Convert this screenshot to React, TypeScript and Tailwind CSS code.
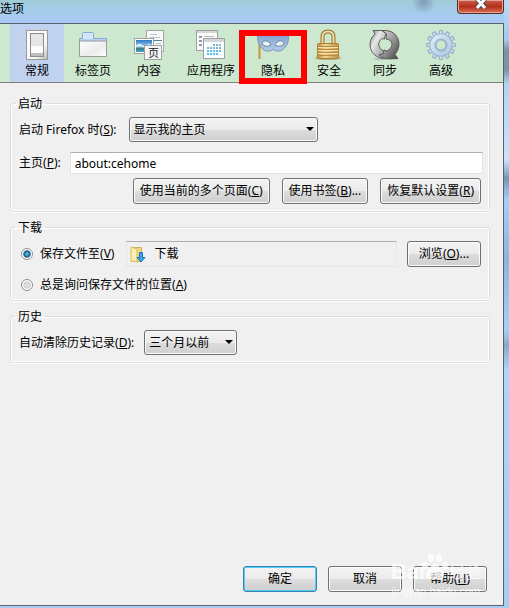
import React, { useState } from "react";

type ChildrenProps = { children: React.ReactNode };

const BUTTON_FACE =
  "border rounded-[3px] bg-[linear-gradient(#f3f3f3,#ebebeb_50%,#dddddd_50%,#cfcfcf)]";
const NORMAL_EDGE = "border-[#707070] shadow-[inset_0_0_0_1px_#fbfbfb]";
const DEFAULT_EDGE = "border-[#3c7fb1] shadow-[inset_0_0_0_1px_#48d0f5]";

function Icon({ children }: ChildrenProps) {
  return (
    <svg viewBox="0 0 32 32" className="block size-8" aria-hidden="true">
      {children}
    </svg>
  );
}

function SwitchIcon() {
  return (
    <Icon>
      <defs>
        <linearGradient id="sw" x1="0" y1="0" x2="1" y2="1">
          <stop offset="0" stopColor="#fff" />
          <stop offset=".7" stopColor="#f6f6f6" />
          <stop offset="1" stopColor="#b4b4b4" />
        </linearGradient>
      </defs>
      <rect x="5.5" y="1.5" width="21" height="29" fill="url(#sw)" stroke="#9a9a9a" />
      <rect x="9.5" y="4.5" width="13" height="23" fill="#e6e6e6" stroke="#8c8c8c" />
      <rect x="10" y="17" width="12" height="7" fill="#fdfdfd" />
      <rect x="10" y="24" width="12" height="3" fill="#bdbdbd" />
    </Icon>
  );
}

function TabIcon() {
  return (
    <Icon>
      <defs>
        <linearGradient id="tb" x1="0" y1="0" x2="1" y2="1">
          <stop offset="0" stopColor="#fff" />
          <stop offset=".6" stopColor="#ececec" />
          <stop offset="1" stopColor="#fff" />
        </linearGradient>
      </defs>
      <path d="M2.5 12V9.5h3v-5q0-1 1-1h9q1 0 1 1v5h13V12z" fill="#d3e5f9" stroke="#8aa9d0" />
      <path d="M3 11h26" stroke="#b5d0f0" strokeWidth="2" />
      <path d="M2.5 12v15.500h27V12z" fill="url(#tb)" stroke="#9a9a9a" />
    </Icon>
  );
}

function ContentIcon() {
  return (
    <Icon>
      <defs>
        <linearGradient id="sky" x1="0" y1="0" x2="0" y2="1">
          <stop offset="0" stopColor="#2a78c8" />
          <stop offset=".6" stopColor="#a5d9f2" />
          <stop offset=".65" stopColor="#3a7d72" />
          <stop offset="1" stopColor="#4a9bd0" />
        </linearGradient>
      </defs>
      <rect x="13.5" y="1.5" width="17" height="21" fill="#f7f8f9" stroke="#a5a5a5" />
      <path d="M17 5.5h7M17 8.5h10M23 14.5h5" stroke="#b8c2cc" />
      <path d="M17 11.5h12" stroke="#468b9e" />
      <rect x="1.5" y="9.5" width="19" height="15" fill="#fff" stroke="#a0a0a0" />
      <rect x="3" y="11" width="16" height="12" fill="url(#sky)" />
      <path d="M3 17q3-4 6-1t6-1l4 1v1q-6 3-9 1t-7 0z" fill="#e4f5f9" />
      <rect x="11.5" y="16.5" width="17" height="14" fill="#f6f6f6" stroke="#a0a0a0" />
      <text x="15" y="28" fontSize="11" fill="#222">页</text>
    </Icon>
  );
}

function AppsIcon() {
  const cells: [number, number][] = [];
  for (let y = 0; y < 4; y++) {
    for (let x = 0; x < 5; x++) {
      if (!(y === 0 && x < 2) && !(y === 3 && x > 3)) cells.push([x, y]);
    }
  }
  return (
    <Icon>
      <rect x="1.5" y="1.5" width="21" height="20" fill="#fbfbfb" stroke="#a0a0a0" />
      <path d="M2 3h20" stroke="#d5d5d5" strokeWidth="2" />
      <path d="M4 8h3M4 12h3M4 16h3" stroke="#8898a8" strokeWidth="2" />
      <path d="M9 7.5h10" stroke="#b4b8bc" />
      <rect x="8.5" y="9.5" width="21" height="20" fill="#fafdff" stroke="#a0a0a0" />
      <path d="M9 11.5h20" stroke="#d3d5d7" strokeWidth="3" />
      {cells.map(([x, y]) => (
        <rect key={`${x}-${y}`} x={12 + x * 3} y={15 + y * 3} width="2" height="2" fill={y > 1 ? "#5cc0e4" : "#86b4c8"} />
      ))}
    </Icon>
  );
}

function MaskIcon() {
  return (
    <Icon>
      <defs>
        <linearGradient id="mk" x1="0" y1="0" x2="0" y2="1">
          <stop offset="0" stopColor="#7d9fcb" />
          <stop offset="1" stopColor="#b4cdee" />
        </linearGradient>
      </defs>
      <path d="M2.5 8v22" stroke="#c4963a" strokeWidth="2" />
      <path d="M.5 5q8-2 15.500 2 8-4 15.500-2 1 9-4 14-3 4-8 3-3-3-7 0-5 1-8-3Q0 14 .5 5z" fill="url(#mk)" stroke="#7f95b5" />
      <path d="M5 15q1-4 5-3 3 1 4 4-5 3-9-1zM27 15q-1-4-5-3-3 1-4 4 5 3 9-1z" fill="#e9f3ea" stroke="#6d85a8" />
    </Icon>
  );
}

function LockIcon() {
  return (
    <Icon>
      <defs>
        <linearGradient id="lk" x1="0" y1="0" x2="1" y2="0">
          <stop offset="0" stopColor="#b88a38" />
          <stop offset=".35" stopColor="#f0d69a" />
          <stop offset="1" stopColor="#c4923b" />
        </linearGradient>
      </defs>
      <ellipse cx="15" cy="29" rx="13" ry="2" fill="#a3b08e" />
      <path d="M9.5 17V8q0-5.500 5.500-5.500T20.500 8v9" fill="none" stroke="#9a7430" strokeWidth="4" />
      <path d="M9.5 17V8q0-5.500 5.500-5.500T20.500 8v9" fill="none" stroke="#ecd6a4" strokeWidth="2" />
      <rect x="4.5" y="14.5" width="21" height="15" rx="1" fill="url(#lk)" stroke="#b08235" />
      <path d="M5 17.5h20M5 20.5h20M5 23.5h20M5 26.5h20" stroke="#b98b3c" />
      <path d="M5 18.5h20M5 21.5h20M5 24.5h20" stroke="#f5e1ad" />
    </Icon>
  );
}

function SyncIcon() {
  return (
    <Icon>
      <defs>
        <linearGradient id="sy1" x1="0" y1="0" x2="1" y2="1">
          <stop offset="0" stopColor="#777" />
          <stop offset=".35" stopColor="#e8e8e8" />
          <stop offset="1" stopColor="#888" />
        </linearGradient>
        <linearGradient id="sy2" x1="0" y1="0" x2="1" y2="1">
          <stop offset="0" stopColor="#e2e2e2" />
          <stop offset=".6" stopColor="#8a8a8a" />
          <stop offset="1" stopColor="#3c3c3c" />
        </linearGradient>
      </defs>
      <ellipse cx="17" cy="30" rx="12" ry="1" fill="#a8b9a8" />
      <path d="M14 29.500Q4 28 1.500 19.500-.5 10.500 6 5L4 1.500H13l4 3-2 6-1.500-1.500q-4 3-4 7 .5 4 6.500 7z" fill="url(#sy1)" stroke="#606060" />
      <path d="M13 1.500q11-1 15.500 7 4 9-2.500 17l3 4H18q-6 0-8-4l4-.5 1-4 2.500 1q5-2 5.500-6.500-.5-5-6-5.500l.5-5z" fill="url(#sy2)" stroke="#5c5c5c" />
    </Icon>
  );
}

function GearIcon() {
  return (
    <Icon>
      <defs>
        <linearGradient id="gr" x1="0" y1="0" x2="1" y2="1">
          <stop offset="0" stopColor="#dbe9f6" />
          <stop offset="1" stopColor="#b2cbe2" />
        </linearGradient>
      </defs>
      {Array.from({ length: 12 }, (_, i) => (
        <path key={i} d="M14 6l.5-4.500h3L18 6z" fill="#c9dcee" stroke="#93adc8" transform={`rotate(${i * 30} 16 16)`} />
      ))}
      <circle cx="16" cy="16" r="8" fill="none" stroke="#93adc8" strokeWidth="7" />
      <circle cx="16" cy="16" r="8" fill="none" stroke="url(#gr)" strokeWidth="5.5" />
      <circle cx="16" cy="16" r="6" fill="none" stroke="#8ba8c6" />
    </Icon>
  );
}

function FolderIcon() {
  return (
    <svg viewBox="0 0 16 17" className="h-[17px] w-4 shrink-0" aria-hidden="true">
      <path d="M1.5 1.5h10v14h-10z" fill="#f1d77b" stroke="#d4b254" />
      <path d="M1 1l6 2v13l-6-1z" fill="#fbeeb0" stroke="#d9bd66" />
      <path d="M9.5 6.5h3v5h2.5l-4 4.500-4-4.500h2.500z" fill="#38a5ec" stroke="#1671bd" />
    </svg>
  );
}

const TABS = [
  { label: "常规", icon: <SwitchIcon /> },
  { label: "标签页", icon: <TabIcon /> },
  { label: "内容", icon: <ContentIcon /> },
  { label: "应用程序", icon: <AppsIcon /> },
  { label: "隐私", icon: <MaskIcon />, marked: true },
  { label: "安全", icon: <LockIcon /> },
  { label: "同步", icon: <SyncIcon /> },
  { label: "高级", icon: <GearIcon /> },
];

function Key({ children }: ChildrenProps) {
  return <span>(<u className="underline-offset-1">{children}</u>)</span>;
}

function Button({ children, wide, primary }: ChildrenProps & { wide?: boolean; primary?: boolean }) {
  return (
    <button
      type="button"
      className={`h-[26px] whitespace-nowrap ${wide ? "w-[74px]" : "px-[6px]"} ${BUTTON_FACE} ${
        primary ? DEFAULT_EDGE : NORMAL_EDGE
      }`}
    >
      {children}
    </button>
  );
}

function Select({ id, options, className }: { id: string; options: string[]; className: string }) {
  return (
    <div className={`relative ${className}`}>
      <select id={id} className={`block h-[25px] w-full appearance-none pr-5 pl-1 ${BUTTON_FACE} ${NORMAL_EDGE}`}>
        {options.map((o) => (
          <option key={o}>{o}</option>
        ))}
      </select>
      <svg viewBox="0 0 8 4" className="pointer-events-none absolute top-[10px] right-1 h-1 w-2" aria-hidden="true">
        <path d="M0 0h8L4 4z" fill="#000" />
      </svg>
    </div>
  );
}

function Group({ title, children }: ChildrenProps & { title: string }) {
  return (
    <fieldset className="min-w-0 rounded-[3px] border border-[#d5dfe5] pt-[6px] pr-[6px] pb-[7px] pl-2 shadow-[inset_0_0_0_1px_#fff,0_1px_0_#fff]">
      <legend className="-ml-1 h-4 px-[3px] pt-px leading-4">{title}</legend>
      {children}
    </fieldset>
  );
}

function Radio({ id, defaultChecked, children }: ChildrenProps & { id: string; defaultChecked?: boolean }) {
  return (
    <div className="flex items-center gap-[7px] px-[2px] whitespace-nowrap">
      <input
        id={id}
        type="radio"
        name="download"
        defaultChecked={defaultChecked}
        className="size-3 appearance-none rounded-full border border-[#8e8f8f] bg-[radial-gradient(#e4e4e4,#d0d0d0_45%,#fff_60%)] checked:bg-[radial-gradient(circle,#62cdf4,#145581_45%,#fff_60%)]"
      />
      <label htmlFor={id}>{children}</label>
    </div>
  );
}

function Watermark() {
  return (
    <div className="pointer-events-none absolute right-[22px] bottom-[7px] flex flex-col items-center text-white/75" aria-hidden="true">
      <div className="flex items-end text-[22px] leading-6 font-bold">
        <span className="font-['Liberation_Sans']">Bai</span>
        <svg viewBox="0 0 28 32" className="-ml-1 h-8 w-7" fill="currentColor">
          <ellipse cx="4" cy="14" rx="3" ry="4" />
          <ellipse cx="10" cy="6" rx="3" ry="4" />
          <ellipse cx="18" cy="6" rx="3" ry="4" />
          <ellipse cx="24" cy="14" rx="3" ry="4" />
          <path d="M14 12q3 0 5 4 5 4 4 8-1 5-9 3-8 2-9-3-1-4 4-8 2-4 5-4z" />
        </svg>
        <span className="text-base leading-6 font-normal">经验</span>
      </div>
      <span className="font-['Liberation_Sans'] text-[11px] leading-[14px]">jingyan.baidu.com</span>
    </div>
  );
}

export default function App() {
  const [tab, setTab] = useState("常规");
  return (
    <div className="flex min-h-screen flex-col bg-[linear-gradient(#b9dcf0,#a5c9ef_40px,#7e93a8_50px,#7e93a8_70px,#b4d3f2_84px,#cbe2fb_160px,#7895b5_178px,#a6cffa_200px,#8db4dc_260px,#a8cff8_330px,#8aa8ca_345px,#b0d4fa_370px,#a8cdf0)] pr-[5px] pb-[2px] font-['Noto_Sans','Noto_Sans_CJK_SC',sans-serif] text-xs text-black">
      <header className="flex h-[23px] items-start justify-between bg-[radial-gradient(circle_at_84%_2px,#7f9bb8,transparent_12px),linear-gradient(#a0cbd8,#a5ccec_50%,#a9c9f3)]">
        <h1 className="pt-px leading-4">选项</h1>
        <button
          type="button"
          aria-label="关闭"
          className="flex h-[14px] w-[47px] items-start justify-center rounded-b-[4px] border border-t-0 border-[#5d2a2c] bg-[linear-gradient(#c8604a,#b5301a_50%,#d87254)] shadow-[inset_0_0_0_1px_#e5a398]"
        >
          <svg viewBox="0 0 12 9" className="h-[9px] w-3" aria-hidden="true">
            <path d="M2 -1l8 9M10 -1L2 8" stroke="#514a55" strokeWidth="5" />
            <path d="M2 -1l8 9M10 -1L2 8" stroke="#fff" strokeWidth="3" />
          </svg>
        </button>
      </header>

      <div className="relative flex flex-1 flex-col border-t border-r border-b border-[#56626e] bg-[#f0f0f0]">
        <nav className="flex h-[59px] gap-[2px] border-b border-[#808080] bg-[#cde8cf] pl-[10px]">
          {TABS.map((t) => (
            <button
              key={t.label}
              type="button"
              onClick={() => setTab(t.label)}
              className={`relative flex min-w-[54px] flex-col items-center px-[9px] pt-[5px] whitespace-nowrap ${
                tab === t.label ? "bg-[#c1d2ee]" : ""
              }`}
            >
              {t.icon}
              <span className="leading-5">{t.label}</span>
              {t.marked && <span className="absolute -inset-x-[7px] top-[6px] -bottom-[2px] border-6 border-[#fe0000]" />}
            </button>
          ))}
        </nav>

        <main className="flex flex-1 flex-col gap-[7px] pt-3 pr-[13px] pl-[10px]">
          <Group title="启动">
            <div className="flex items-center gap-3">
              <label htmlFor="startup" className="whitespace-nowrap">启动 Firefox 时<Key>S</Key>:</label>
              <Select id="startup" className="w-[189px]" options={["显示我的主页", "显示空白页", "显示上次打开的窗口和标签页"]} />
            </div>
            <div className="flex items-center gap-[9px] pt-[10px]">
              <label htmlFor="home" className="whitespace-nowrap">主页<Key>P</Key>:</label>
              <input
                id="home"
                defaultValue="about:cehome"
                className="h-[22px] min-w-0 flex-1 border border-[#e2e3ea] border-t-[#abadb3] bg-white px-1"
              />
            </div>
            <div className="flex justify-end gap-3 pt-1 pr-[2px]">
              <Button>使用当前的多个页面<Key>C</Key></Button>
              <Button>使用书签<Key>B</Key>...</Button>
              <Button>恢复默认设置<Key>R</Key></Button>
            </div>
          </Group>

          <Group title="下载">
            <div className="flex items-center gap-[10px] pr-[2px]">
              <Radio id="save" defaultChecked>保存文件至<Key>V</Key></Radio>
              <div className="flex h-[26px] flex-1 items-center gap-2 border border-[#e2e8ee] border-t-[#abadb3] px-[3px]">
                <FolderIcon />
                <span>下载</span>
              </div>
              <Button wide>浏览<Key>O</Key>...</Button>
            </div>
            <div className="flex pt-[10px]">
              <Radio id="ask">总是询问保存文件的位置<Key>A</Key></Radio>
            </div>
          </Group>

          <Group title="历史">
            <div className="flex items-center gap-[10px]">
              <label htmlFor="history" className="whitespace-nowrap">自动清除历史记录<Key>D</Key>:</label>
              <Select id="history" className="w-[93px]" options={["三个月以前", "一个月以前", "从不"]} />
            </div>
          </Group>
        </main>

        <footer className="flex justify-end gap-[11px] pr-4 pb-[13px]">
          <Button wide primary>确定</Button>
          <Button wide>取消</Button>
          <Button wide>帮助<Key>H</Key></Button>
        </footer>
        <Watermark />
      </div>
    </div>
  );
}
